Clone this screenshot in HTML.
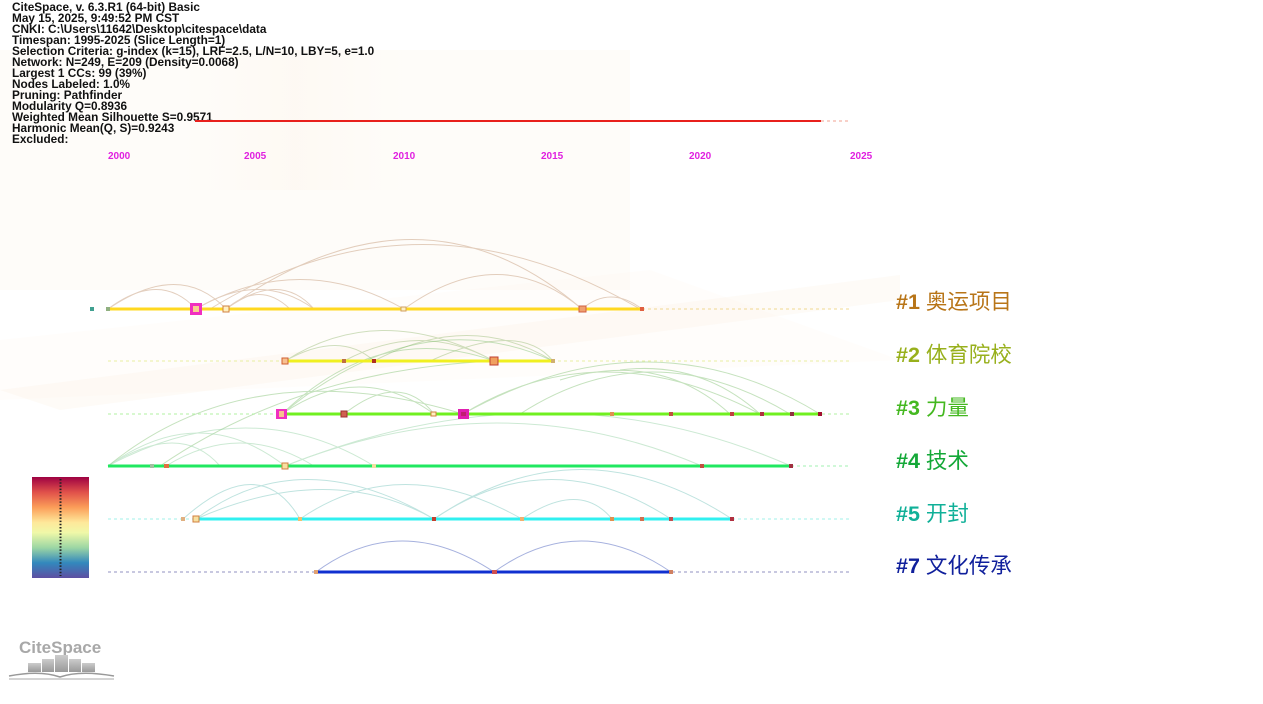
<!DOCTYPE html>
<html><head><meta charset="utf-8"><style>
html,body{margin:0;padding:0;background:#fff;width:1263px;height:704px;overflow:hidden}
svg{display:block}
.info{font-family:"Liberation Sans",sans-serif;font-weight:bold;font-size:11.8px;fill:#111}
.yr{font-family:"Liberation Sans",sans-serif;font-weight:bold;font-size:10px;fill:#e020e0}
.lab{font-family:"Liberation Sans","Noto Sans CJK SC",sans-serif;font-size:21.5px}
.lab tspan.n{font-weight:bold}
</style></head><body>
<svg width="1263" height="704" viewBox="0 0 1263 704" xmlns="http://www.w3.org/2000/svg">
<defs>
<linearGradient id="cb" x1="0" y1="0" x2="0" y2="1">
<stop offset="0" stop-color="#9e0142"/><stop offset="0.15" stop-color="#e0504a"/><stop offset="0.3" stop-color="#fb9d59"/><stop offset="0.45" stop-color="#fee89a"/><stop offset="0.55" stop-color="#f0f8a8"/><stop offset="0.7" stop-color="#9cd6a4"/><stop offset="0.85" stop-color="#3288bd"/><stop offset="1" stop-color="#5e4fa2"/>
</linearGradient>
<linearGradient id="bg1" x1="0" y1="0" x2="1" y2="0"><stop offset="0" stop-color="#fdf3e6" stop-opacity="0"/><stop offset="0.5" stop-color="#fbeedd" stop-opacity="0.7"/><stop offset="1" stop-color="#fdf3e6" stop-opacity="0"/></linearGradient>
<linearGradient id="lg" x1="0" y1="0" x2="0" y2="1"><stop offset="0" stop-color="#ccc"/><stop offset="1" stop-color="#999"/></linearGradient>
</defs>
<!-- faint background -->
<rect x="0" y="50" width="630" height="240" fill="#fdf9f3" opacity="0.5"/>
<rect x="180" y="50" width="230" height="140" fill="url(#bg1)" opacity="0.3"/>
<polygon points="0,390 900,275 900,300 60,410" fill="#fcefe0" opacity="0.25"/>
<polygon points="0,340 650,270 900,360 0,400" fill="#fdf5ec" opacity="0.2"/>

<g class="info">
<text x="12" y="11">CiteSpace, v. 6.3.R1 (64-bit) Basic</text>
<text x="12" y="22">May 15, 2025, 9:49:52 PM CST</text>
<text x="12" y="33">CNKI: C:\Users\11642\Desktop\citespace\data</text>
<text x="12" y="44">Timespan: 1995-2025 (Slice Length=1)</text>
<text x="12" y="55">Selection Criteria: g-index (k=15), LRF=2.5, L/N=10, LBY=5, e=1.0</text>
<text x="12" y="66">Network: N=249, E=209 (Density=0.0068)</text>
<text x="12" y="77">Largest 1 CCs: 99 (39%)</text>
<text x="12" y="88">Nodes Labeled: 1.0%</text>
<text x="12" y="99">Pruning: Pathfinder</text>
<text x="12" y="110">Modularity Q=0.8936</text>
<text x="12" y="121">Weighted Mean Silhouette S=0.9571</text>
<text x="12" y="132">Harmonic Mean(Q, S)=0.9243</text>
<text x="12" y="143">Excluded:</text>
</g>
<line x1="195" y1="121" x2="821" y2="121" stroke="#e8201c" stroke-width="2"/>
<line x1="821" y1="121" x2="850" y2="121" stroke="#f0a090" stroke-width="1" stroke-dasharray="3,3"/>
<g class="yr">
<text x="108" y="159">2000</text><text x="244" y="159">2005</text><text x="393" y="159">2010</text><text x="541" y="159">2015</text><text x="689" y="159">2020</text><text x="850" y="159">2025</text>
</g>

<!-- arcs -->
<g fill="none" stroke-width="1">
<g stroke="#c8a080" opacity="0.5">
<path d="M108 309 Q160 270 196 309"/><path d="M108 309 Q180 260 226 309"/><path d="M196 309 Q300 250 404 309"/><path d="M226 309 Q420 170 582 309"/><path d="M196 309 Q260 270 314 309"/><path d="M404 309 Q500 240 582 309"/><path d="M226 309 Q280 270 314 309"/><path d="M582 309 Q610 285 642 309"/><path d="M210 309 Q420 180 640 309"/><path d="M226 309 Q260 280 290 309"/>
</g>
<g stroke="#a0c080" opacity="0.5">
<path d="M285 361 Q380 300 494 361"/><path d="M285 361 Q340 330 374 361"/><path d="M374 361 Q470 310 553 361"/><path d="M344 361 Q420 320 494 361"/><path d="M430 361 Q520 320 553 361"/>
</g>
<g stroke="#80c070" opacity="0.45">
<path d="M282 414 Q380 320 494 361"/><path d="M282 414 Q420 300 553 361"/><path d="M344 414 Q400 370 434 414"/><path d="M463 414 Q600 330 760 414"/><path d="M463 414 Q650 310 820 414"/><path d="M282 414 Q360 360 434 414"/><path d="M520 414 Q650 330 790 414"/><path d="M560 380 Q660 350 730 414"/><path d="M620 370 Q700 360 760 414"/>
<path d="M108 466 Q250 350 463 414"/><path d="M160 466 Q300 370 494 361"/>
</g>
<g stroke="#90d0a0" opacity="0.45">
<path d="M108 466 Q200 400 285 466"/><path d="M108 466 Q180 420 220 466"/><path d="M108 466 Q250 390 374 466"/><path d="M166 466 Q240 420 314 466"/><path d="M285 466 Q500 380 702 466"/><path d="M285 466 Q550 360 791 466"/>
</g>
<g stroke="#80c8c0" opacity="0.5">
<path d="M183 519 Q260 450 300 519"/><path d="M196 519 Q300 440 434 519"/><path d="M300 519 Q400 450 522 519"/><path d="M434 519 Q550 440 671 519"/><path d="M434 519 Q580 420 732 519"/><path d="M522 519 Q580 480 612 519"/><path d="M196 519 Q330 460 434 519"/>
</g>
<g stroke="#8090d0" opacity="0.7">
<path d="M316 572 Q400 510 494 572"/><path d="M494 572 Q580 510 671 572"/>
</g>
</g>

<!-- dashed extensions -->
<g stroke-width="1" stroke-dasharray="3,3">
<line x1="642" y1="309" x2="850" y2="309" stroke="#f0d890"/>
<line x1="108" y1="361" x2="850" y2="361" stroke="#e8f0a0"/>
<line x1="108" y1="414" x2="850" y2="414" stroke="#b0f0a0"/>
<line x1="791" y1="466" x2="850" y2="466" stroke="#a0f0b0"/>
<line x1="108" y1="519" x2="850" y2="519" stroke="#a0f0e8"/>
<line x1="108" y1="572" x2="850" y2="572" stroke="#9090c0"/>
</g>
<!-- main lines -->
<line x1="108" y1="309" x2="642" y2="309" stroke="#ffd820" stroke-width="3"/>
<line x1="285" y1="361" x2="553" y2="361" stroke="#f0f020" stroke-width="3"/>
<line x1="282" y1="414" x2="820" y2="414" stroke="#70f020" stroke-width="3"/>
<line x1="108" y1="466" x2="791" y2="466" stroke="#20e860" stroke-width="3"/>
<line x1="196" y1="519" x2="732" y2="519" stroke="#30f0f0" stroke-width="3"/>
<line x1="316" y1="572" x2="671" y2="572" stroke="#1030d0" stroke-width="3"/>

<!-- nodes -->
<g stroke-width="1">
<rect x="90" y="307" width="4" height="4" fill="#40a090"/>
<rect x="106" y="307" width="4" height="4" fill="#90b080"/>
<rect x="190" y="303" width="12" height="12" fill="#f030c0"/><rect x="193" y="306" width="6" height="6" fill="#f8d090"/>
<rect x="223" y="306" width="6" height="6" fill="#fff0c0" stroke="#d08040"/>
<rect x="401" y="307" width="5" height="4" fill="#fff0c0" stroke="#d0a060"/>
<rect x="579" y="306" width="7" height="6" fill="#f0a070" stroke="#d06040"/>
<rect x="640" y="307" width="4" height="4" fill="#e06040"/>
<rect x="282" y="358" width="6" height="6" fill="#f8c090" stroke="#d06030"/>
<rect x="342" y="359" width="4" height="4" fill="#c07040"/>
<rect x="372" y="359" width="4" height="4" fill="#b03020"/>
<rect x="490" y="357" width="8" height="8" fill="#f0a060" stroke="#c04030"/>
<rect x="551" y="359" width="4" height="4" fill="#d0b070"/>
<rect x="276" y="409" width="11" height="10" fill="#f030c0"/><rect x="279" y="411" width="5" height="6" fill="#f8c090"/>
<rect x="341" y="411" width="6" height="6" fill="#d06050" stroke="#a03030"/>
<rect x="431" y="412" width="5" height="4" fill="#fff0c0" stroke="#d08040"/>
<rect x="458" y="409" width="11" height="10" fill="#e020b0"/><rect x="461" y="412" width="5" height="4" fill="#c02070"/>
<rect x="610" y="412" width="4" height="4" fill="#e09050"/>
<rect x="669" y="412" width="4" height="4" fill="#c05040"/>
<rect x="730" y="412" width="4" height="4" fill="#c04040"/>
<rect x="760" y="412" width="4" height="4" fill="#b03040"/>
<rect x="790" y="412" width="4" height="4" fill="#903040"/>
<rect x="818" y="412" width="4" height="4" fill="#a01030"/>
<rect x="150" y="464" width="4" height="4" fill="#a0c0a0"/>
<rect x="164" y="464" width="5" height="4" fill="#e07040"/>
<rect x="282" y="463" width="6" height="6" fill="#f8e0a0" stroke="#d08040"/>
<rect x="372" y="464" width="4" height="4" fill="#f0e0a0"/>
<rect x="700" y="464" width="4" height="4" fill="#c05040"/>
<rect x="789" y="464" width="4" height="4" fill="#a03040"/>
<rect x="181" y="517" width="4" height="4" fill="#e0b080"/>
<rect x="193" y="516" width="6" height="6" fill="#f8e0a0" stroke="#d08040"/>
<rect x="298" y="517" width="4" height="4" fill="#f0c070"/>
<rect x="432" y="517" width="4" height="4" fill="#c04030"/>
<rect x="520" y="517" width="4" height="4" fill="#f0b070"/>
<rect x="610" y="517" width="4" height="4" fill="#e09050"/>
<rect x="640" y="517" width="4" height="4" fill="#d07050"/>
<rect x="669" y="517" width="4" height="4" fill="#c05050"/>
<rect x="730" y="517" width="4" height="4" fill="#b03040"/>
<rect x="314" y="570" width="4" height="4" fill="#e0a070"/>
<rect x="492" y="570" width="5" height="4" fill="#d05050"/>
<rect x="669" y="570" width="4" height="4" fill="#d08060"/>
</g>

<!-- labels -->
<g class="lab">
<text x="896" y="309" fill="#b87518"><tspan class="n">#1</tspan> 奥运项目</text>
<text x="896" y="362" fill="#98b01c"><tspan class="n">#2</tspan> 体育院校</text>
<text x="896" y="415" fill="#44b820"><tspan class="n">#3</tspan> 力量</text>
<text x="896" y="468" fill="#14a838"><tspan class="n">#4</tspan> 技术</text>
<text x="896" y="521" fill="#10b098"><tspan class="n">#5</tspan> 开封</text>
<text x="896" y="573" fill="#10209c"><tspan class="n">#7</tspan> 文化传承</text>
</g>

<!-- color bar -->
<rect x="32" y="477" width="57" height="101" fill="url(#cb)"/>
<line x1="60.5" y1="479" x2="60.5" y2="576" stroke="#222" stroke-width="2" stroke-dasharray="1.5,1.7"/>

<!-- logo -->
<text x="19" y="653" font-family="Liberation Sans,sans-serif" font-weight="bold" font-size="17" fill="#a8a8a8">CiteSpace</text>
<g fill="url(#lg)">
<rect x="28" y="663" width="13" height="9"/><rect x="42" y="659" width="12" height="13"/><rect x="55" y="655" width="13" height="17"/><rect x="69" y="659" width="12" height="13"/><rect x="82" y="663" width="13" height="9"/>
</g>
<path d="M9 676 Q40 670 60 677 Q80 670 114 676" stroke="#999" stroke-width="1.5" fill="none"/>
<path d="M9 679 L114 679" stroke="#aaa" stroke-width="1" fill="none"/>
</svg>
</body></html>
